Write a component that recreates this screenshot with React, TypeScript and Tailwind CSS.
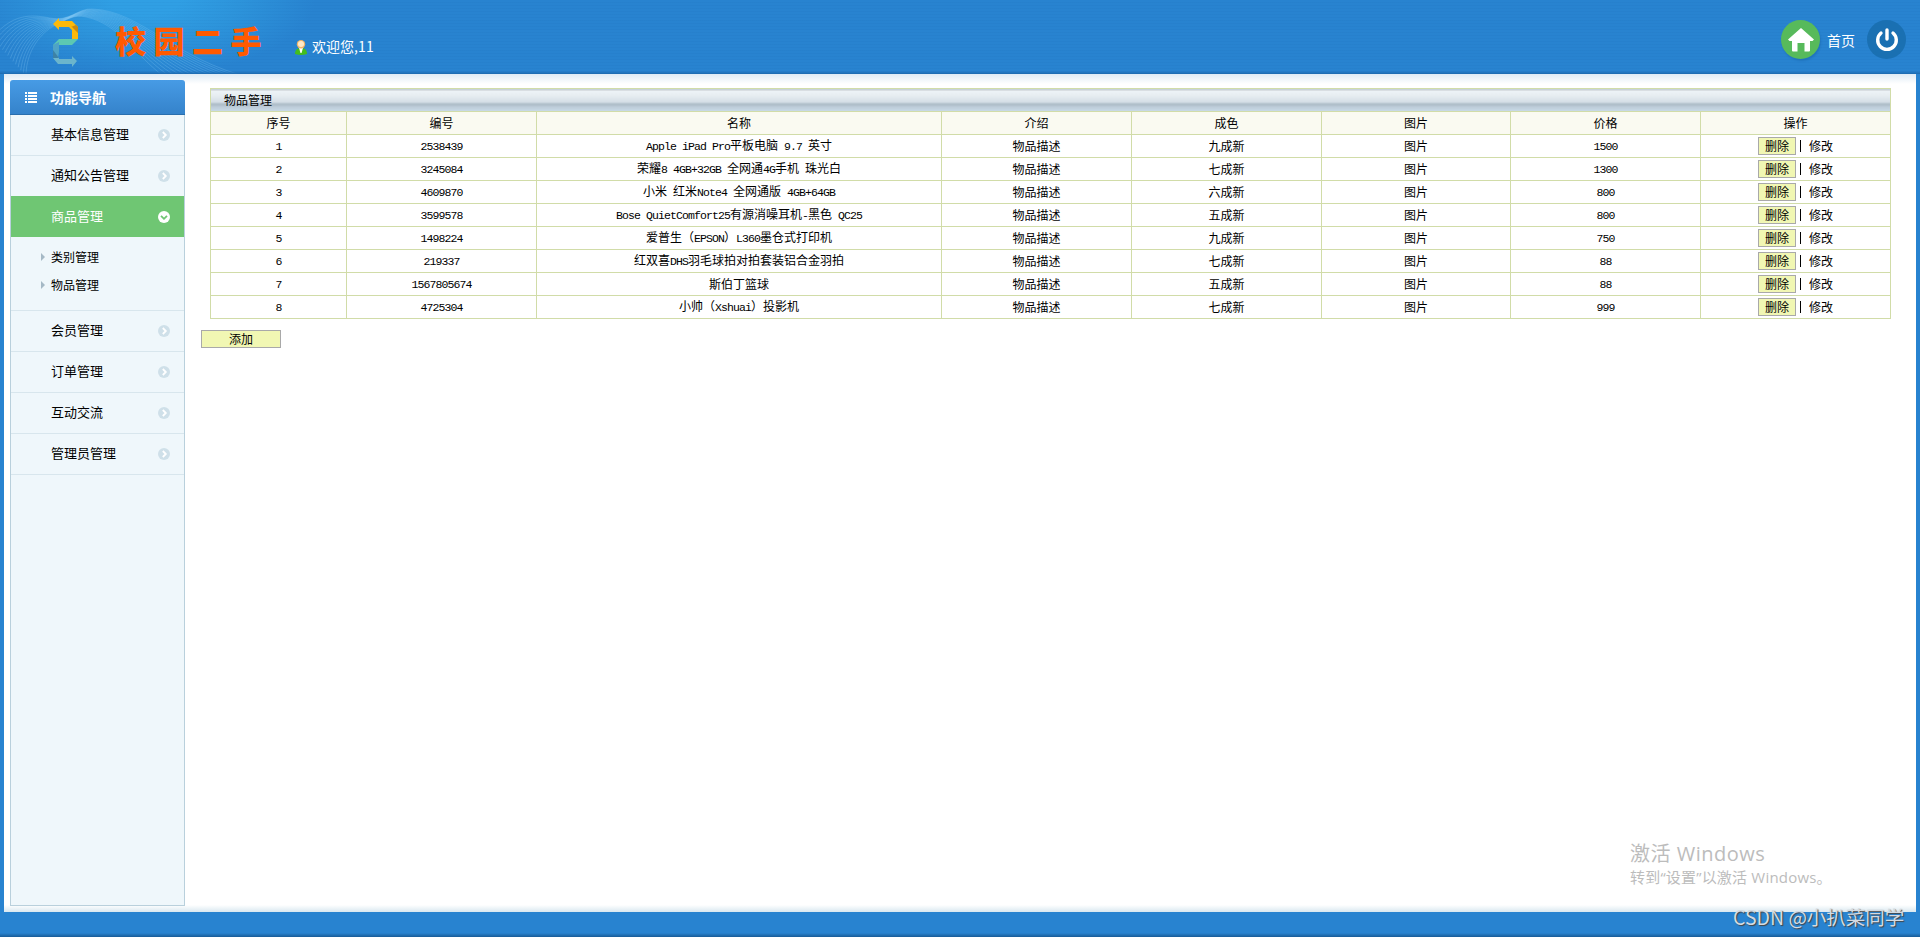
import { Fragment } from "react";

const SONG = "font-['Noto_Sans_CJK_SC',sans-serif]";

const columns = ["序号", "编号", "名称", "介绍", "成色", "图片", "价格", "操作"];

const goods = [
  { code: "2538439", name: "Apple iPad Pro平板电脑 9.7 英寸", condition: "九成新", price: "1500" },
  { code: "3245084", name: "荣耀8 4GB+32GB 全网通4G手机 珠光白", condition: "七成新", price: "1300" },
  { code: "4609870", name: "小米 红米Note4 全网通版 4GB+64GB", condition: "六成新", price: "800" },
  { code: "3599578", name: "Bose QuietComfort25有源消噪耳机-黑色 QC25", condition: "五成新", price: "800" },
  { code: "1498224", name: "爱普生（EPSON）L360墨仓式打印机", condition: "九成新", price: "750" },
  { code: "219337", name: "红双喜DHS羽毛球拍对拍套装铝合金羽拍", condition: "七成新", price: "88" },
  { code: "1567805674", name: "斯伯丁篮球", condition: "五成新", price: "88" },
  { code: "4725304", name: "小帅（Xshuai）投影机", condition: "七成新", price: "999" },
];

const menu = [
  { label: "基本信息管理" },
  { label: "通知公告管理" },
  { label: "商品管理", children: ["类别管理", "物品管理"] },
  { label: "会员管理" },
  { label: "订单管理" },
  { label: "互动交流" },
  { label: "管理员管理" },
];

// Latin runs take half the width of a Chinese character
function Mixed({ text }: { text: string }) {
  return (
    <>
      {text.split(/([\x20-\x7e]+)/).map((part, i) =>
        i % 2 ? (
          <span key={i} className="font-['Liberation_Mono',monospace] text-[11.5px] tracking-[-0.9px] whitespace-pre">
            {part}
          </span>
        ) : (
          <Fragment key={i}>{part}</Fragment>
        )
      )}
    </>
  );
}

function Logo() {
  return (
    <svg className="mt-[18px] ml-[52px] shrink-0" width="27" height="49" viewBox="0 0 27 49">
      <path d="M1 6 7 0v3h13l6 6v12h-6v-9l-3-3H7v3z" fill="#fdb90a" />
      <path d="M19 9h1l6 6V9l-2-2z" fill="#c98a12" />
      <path d="M1 27 7 21h19l-6 6H7l-6 6z" fill="#5cc8b2" />
      <path d="M1 27 7 24v10l-1 6-5-5z" fill="#4fa3c6" />
      <path d="M1 33 7 40v1h13v-3l5 5-5 6v-3H6l-5-6z" fill="#6bb5cc" />
      <path d="M1 32 7 40H1z" fill="#3d82a6" />
    </svg>
  );
}

function Waves() {
  const steps = Array.from({ length: 14 }, (_, i) => i / 13);
  return (
    <svg
      className="absolute inset-0"
      width="400"
      height="74"
      viewBox="0 0 400 74"
      fill="none"
      stroke="#8fd0f5"
      strokeOpacity="0.28"
      strokeWidth="0.9"
    >
      {steps.map((t) => (
        <path
          key={t}
          d={`M${-8 + t * 34} ${38 + t * 38} C${12 + t * 14} ${14 + t * 36} ${30 + t * 12} ${14 + t * 18} ${50 + t * 4} ${18 + t * 8} S${78 - t * 4} ${8 + t * 6} ${92 - t * 6} ${9 + t * 8} C${140 - t * 20} ${10 + t * 14} ${175 - t * 40} ${60 - t * 4} ${252 - t * 86} 78`}
        />
      ))}
    </svg>
  );
}

function Header() {
  return (
    <header className="relative flex h-[74px] overflow-hidden bg-[#2883d0] bg-[repeating-linear-gradient(transparent_0_2px,rgba(0,60,130,0.04)_2px_3px),radial-gradient(ellipse_170px_75px_at_145px_0,#309fe4_20%,#2d94db_55%,transparent)] text-white">
      <Waves />
      <div className="relative flex w-full">
        <Logo />
        <h1 className="mt-[17px] ml-[36px] text-[31px] leading-[46px] font-black tracking-[7.5px] text-[#ff5a00]">校园二手</h1>
        <div className="mt-[37px] ml-[26px] flex h-5 items-center gap-[5px]">
          <svg width="12" height="15" viewBox="0 0 12 15">
            <path d="M0 14c0-4 2-6 6-6s6 2 6 6q-6 2-12 0z" fill="#43bd1d" />
            <path d="M4 8h4L6.500 13h-1z" fill="#fff" />
            <circle cx="6" cy="4.300" r="4.200" fill="#f3b568" />
            <circle cx="6" cy="4" r="3" fill="#ffeac8" />
          </svg>
          <span className="relative -top-px text-sm">
            欢迎您,<span className="tracking-[0.4px]">11</span>
          </span>
        </div>
        <div className="mt-5 mr-[14px] ml-auto flex h-[39px] items-center">
          <span className="flex size-[39px] items-center justify-center rounded-full bg-[#57ba5b] shadow-[1px_2px_2px_rgba(0,60,120,0.2)]">
            <svg width="26" height="24" viewBox="0 0 26 24" fill="#fff">
              <path d="M13 0 26 11.500 24.500 13H22v9.500a1 1 0 0 1-1 1h-4.500V15h-7v8.500H5a1 1 0 0 1-1-1V13H1.500L0 11.500z" />
            </svg>
          </span>
          <span className="ml-[7px] text-sm">首页</span>
          <span className="ml-3 flex size-[39px] items-center justify-center rounded-full bg-[#1a70b2]">
            <svg width="24" height="24" viewBox="0 0 24 24" fill="none" stroke="#fff" strokeWidth="3.400" strokeLinecap="round">
              <path d="M12 2v9M6 5a9.300 9.300 0 1 0 12 0" />
            </svg>
          </span>
        </div>
      </div>
      <div className="absolute inset-x-0 bottom-0 h-[3px] bg-linear-to-b from-transparent to-[#1c69ae]" />
    </header>
  );
}

function Sidebar() {
  return (
    <aside className="flex h-[826px] w-[175px] shrink-0 flex-col">
      <div className="flex h-[35px] items-center rounded-t-[3px] border-b border-[#2a6fae] bg-linear-to-b from-[#479be5] to-[#3583cb] pl-[15px] text-sm font-bold text-white">
        <svg width="12" height="11" viewBox="0 0 12 11" fill="#fff">
          <path d="M0 0h2v2H0zM3 0h9v2H3zM0 3h2v2H0zM3 3h9v2H3zM0 6h2v2H0zM3 6h9v2H3zM0 9h2v2H0zM3 9h9v2H3z" />
        </svg>
        <span className="ml-[13px]">功能导航</span>
      </div>
      <nav className="flex-1 border border-t-0 border-[#b9d0dc] bg-[#eff7fb] text-[13px]">
        {menu.map(({ label, children }) => (
          <Fragment key={label}>
            <div
              className={
                children
                  ? "relative -mt-px flex h-[41px] items-center justify-between bg-[#6fc673] pr-[14px] pl-10 text-white"
                  : "flex h-[41px] items-center justify-between border-b border-[#d8e6ed] pr-[14px] pl-10"
              }
            >
              <span className="pb-0.5">{label}</span>
              <svg width="12" height="12" viewBox="0 0 12 12" fill="none" strokeWidth="1.800">
                <circle cx="6" cy="6" r="6" fill={children ? "#fff" : "#cfe0e9"} />
                <path d={children ? "M3 4.800 6 7.800 9 4.800" : "M4.800 3 7.800 6 4.800 9"} stroke={children ? "#6fc673" : "#fff"} />
              </svg>
            </div>
            {children && (
              <ul className="h-[74px] border-b border-[#d8e6ed] pt-[6px] text-xs">
                {children.map((child) => (
                  <li key={child} className="flex h-7 items-center pl-[30px]">
                    <svg width="4" height="8" viewBox="0 0 4 8" fill="#a5b9c6">
                      <path d="M0 0 4 4 0 8z" />
                    </svg>
                    <span className="ml-[6px]">{child}</span>
                  </li>
                ))}
              </ul>
            )}
          </Fragment>
        ))}
      </nav>
    </aside>
  );
}

function GoodsTable() {
  return (
    <table className="ml-[9px] w-[1681px] table-fixed border-collapse text-center text-xs leading-[18px] [&_td]:border [&_td]:border-[#d1dca8] [&_td]:p-0">
      <colgroup>
        <col className="w-[136px]" />
        <col className="w-[190px]" />
        <col className="w-[405px]" />
        <col className="w-[190px]" />
        <col className="w-[190px]" />
        <col className="w-[189px]" />
        <col className="w-[190px]" />
        <col className="w-[190px]" />
      </colgroup>
      <tbody>
        <tr className="h-[23px]">
          <td
            colSpan={8}
            className="bg-[linear-gradient(#c5cacd_0_1px,#edf3f7_1px,#e7edf1_6px,#d3dde5_13px,#b0bfca_14px,#b0bfca_16px,#bccbd8_17px,#c9dbe8_22px)] text-left"
          >
            <div className="pl-[13px]">物品管理</div>
          </td>
        </tr>
        <tr className="h-[23px] bg-[#fafaf1]">
          {columns.map((c) => (
            <td key={c}>{c}</td>
          ))}
        </tr>
        {goods.map((g, i) => (
          <tr key={g.code} className="h-[23px]">
            <td><Mixed text={String(i + 1)} /></td>
            <td><Mixed text={g.code} /></td>
            <td><Mixed text={g.name} /></td>
            <td>物品描述</td>
            <td>{g.condition}</td>
            <td>图片</td>
            <td><Mixed text={g.price} /></td>
            <td>
              <div className="flex items-center justify-center">
                <button className="h-[18px] w-[38px] border border-[#a9a9a9] bg-[#f1f7b3] leading-4">删除</button>
                <span className="ml-1 h-3 w-px bg-black" />
                <span className="ml-2">修改</span>
              </div>
            </td>
          </tr>
        ))}
      </tbody>
    </table>
  );
}

export default function App() {
  return (
    <div className={`relative h-[937px] w-[1920px] overflow-hidden bg-[#2883d0] text-black ${SONG}`}>
      <Header />
      <main className="mx-1 flex h-[838px] bg-white bg-[linear-gradient(#dfebf5,#fff_10px,#fff_831px,#d9e8f0)] pt-[6px] pl-[6px]">
        <Sidebar />
        <section className="ml-4 pt-2">
          <GoodsTable />
          <button className="mt-[11px] block h-[18px] w-[80px] border border-[#a9a9a9] bg-[#f1f7b3] text-xs leading-4">添加</button>
        </section>
      </main>
      <footer className="h-[25px] bg-[linear-gradient(#2883d0_21px,#185b97)]" />
      {/* desktop notices floating above the page */}
      <div className="absolute top-[840px] left-[1630px] font-['Open_Sans','Noto_Sans_CJK_SC',sans-serif] text-[#bcbcbc]">
        <p className="text-[20px] leading-[27px] tracking-[0.5px]">激活 Windows</p>
        <p className="text-[15px] leading-[20px] tracking-[0.2px]">转到“设置”以激活 Windows。</p>
      </div>
      <p className="absolute top-[903px] left-[1733px] text-[19.5px] leading-[28px] whitespace-nowrap text-[#d4dbe2] [text-shadow:1px_1px_1px_#444]">
        CSDN @小扒菜同学
      </p>
    </div>
  );
}
